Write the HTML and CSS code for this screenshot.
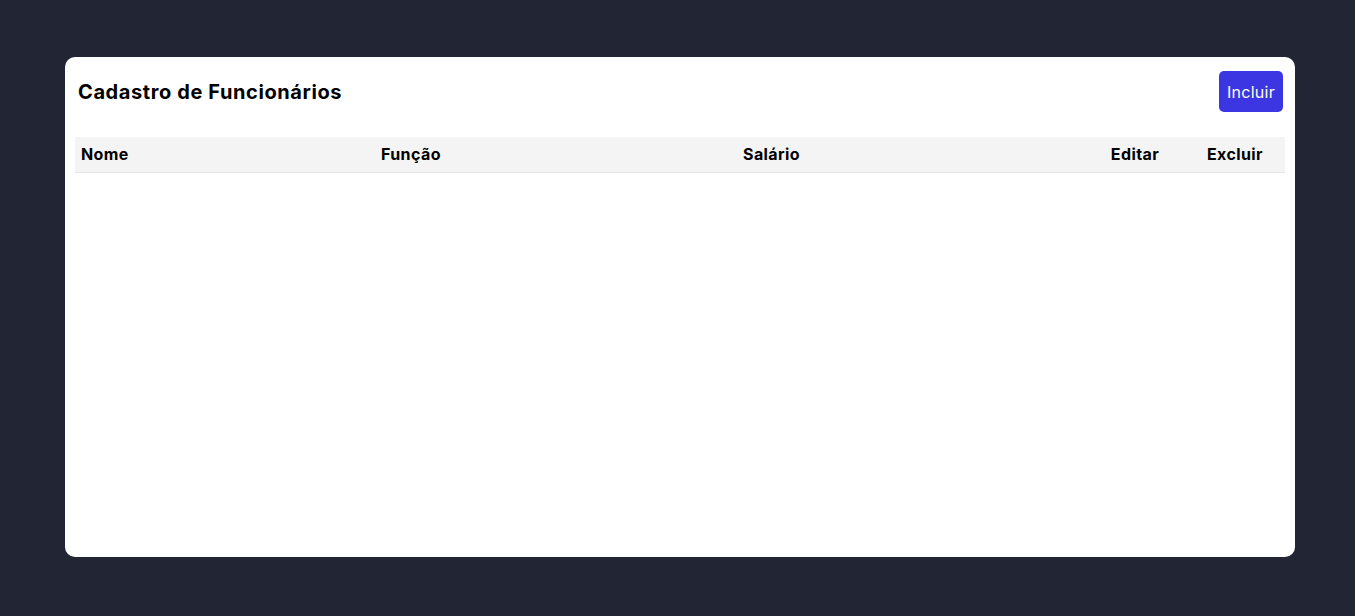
FILE: index.html
```html
<!DOCTYPE html>
<html lang="pt-BR">
<head>
<meta charset="utf-8">
<title>Cadastro de Funcionários</title>
<link rel="stylesheet" href="styles.css">
</head>
<body>
<main class="card">
  <header class="card-header">
    <h1 class="title">Cadastro de Funcionários</h1>
    <button class="btn-add" type="button">Incluir</button>
  </header>
  <table class="table">
    <thead>
      <tr>
        <th class="col-nome">Nome</th>
        <th class="col-funcao">Função</th>
        <th class="col-salario">Salário</th>
        <th class="col-acao">Editar</th>
        <th class="col-acao">Excluir</th>
      </tr>
    </thead>
    <tbody></tbody>
  </table>
</main>
</body>
</html>
```

FILE: styles.css
```css
* { box-sizing: border-box; }

html, body {
  margin: 0;
  height: 100%;
}

body {
  background: #222533;
  font-family: Inter, "Open Sans", "Liberation Sans", sans-serif;
  color: #000;
  padding: 57px 0 0 65px;
}

.card {
  width: 1230px;
  height: 500px;
  background: #fff;
  border-radius: 10px;
  padding: 14px 12px 10px 10px;
}

.card-header {
  display: flex;
  align-items: center;
  justify-content: space-between;
  padding-left: 3px;
  height: 41px;
}

.title {
  margin: 0;
  font-size: 20px;
  font-weight: 700;
  letter-spacing: 0.6px;
}

.btn-add {
  height: 41px;
  width: 64px;
  border: none;
  border-radius: 5px;
  background: #3b36e2;
  color: #fff;
  font-family: inherit;
  font-size: 16px;
  font-weight: 400;
  letter-spacing: 0.3px;
  padding: 0;
}

.table {
  margin-top: 25px;
  width: 1210px;
  border-collapse: collapse;
  table-layout: fixed;
}

.table thead tr {
  background: #f4f4f4;
  border-bottom: 1px solid #e6e6e6;
}

.table th {
  height: 35px;
  padding: 0 6px;
  font-size: 16px;
  font-weight: 700;
  letter-spacing: 0.4px;
  text-align: left;
}

.col-nome { width: 300px; }
.col-funcao { width: 362px; }
.col-salario { width: 348px; }
.table th.col-acao { width: 100px; text-align: center; }
```
